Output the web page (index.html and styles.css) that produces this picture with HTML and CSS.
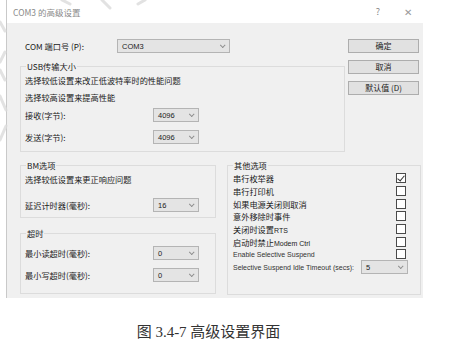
FILE: index.html
```html
<!DOCTYPE html>
<html lang="zh-CN">
<head>
    <meta charset="UTF-8">
    <meta name="viewport" content="width=device-width, initial-scale=1.0">
    <title>COM3 的高级设置</title>
    <link rel="stylesheet" href="styles.css">
</head>
<body>
    <div class="page">
        <!-- faint watermark strokes behind the dialog -->
        <svg class="watermark" width="473" height="160" viewBox="0 0 473 160">
            <g stroke="#dcdcdc" stroke-width="3" stroke-linecap="round" fill="none">
                <line x1="0" y1="22" x2="5" y2="31"/>
                <line x1="0" y1="62" x2="5" y2="52"/>
                <line x1="0" y1="70" x2="5" y2="80"/>
                <line x1="0" y1="96" x2="6" y2="110"/>
                <line x1="0" y1="140" x2="6" y2="126"/>
                <line x1="62" y1="0" x2="70" y2="4"/>
                <line x1="102" y1="0" x2="110" y2="8"/>
                <line x1="138" y1="4" x2="145" y2="0"/>
            </g>
        </svg>

        <div class="dialog">
            <!-- Title bar -->
            <div class="titlebar">
                <span class="title">COM3 的高级设置</span>
                <span class="tb-btn">?</span>
                <span class="tb-btn close">✕</span>
            </div>

            <div class="client">
                <div class="top">
                    <div class="main">
                        <div class="com-row">
                            <label>COM 端口号 (P):</label>
                            <div class="combo com">COM3<span class="arrow"></span></div>
                        </div>

                        <fieldset class="usb">
                            <legend>USB传输大小</legend>
                            <p class="line first">选择较低设置来改正低波特率时的性能问题</p>
                            <p class="line second">选择较高设置来提高性能</p>
                            <div class="field recv">
                                <label>接收(字节):</label>
                                <div class="combo">4096<span class="arrow"></span></div>
                            </div>
                            <div class="field send">
                                <label>发送(字节):</label>
                                <div class="combo">4096<span class="arrow"></span></div>
                            </div>
                        </fieldset>
                    </div>

                    <div class="buttons">
                        <button>确定</button>
                        <button>取消</button>
                        <button>默认值 (D)</button>
                    </div>
                </div>

                <div class="bottom">
                    <div class="left-col">
                        <fieldset class="bm">
                            <legend>BM选项</legend>
                            <p class="line first">选择较低设置来更正响应问题</p>
                            <div class="field delay">
                                <label>延迟计时器(毫秒):</label>
                                <div class="combo">16<span class="arrow"></span></div>
                            </div>
                        </fieldset>

                        <fieldset class="timeout">
                            <legend>超时</legend>
                            <div class="field read">
                                <label>最小读超时(毫秒):</label>
                                <div class="combo">0<span class="arrow"></span></div>
                            </div>
                            <div class="field write">
                                <label>最小写超时(毫秒):</label>
                                <div class="combo">0<span class="arrow"></span></div>
                            </div>
                        </fieldset>
                    </div>

                    <fieldset class="other">
                        <legend>其他选项</legend>
                        <div class="opt"><span>串行枚举器</span><span class="check checked"></span></div>
                        <div class="opt"><span>串行打印机</span><span class="check"></span></div>
                        <div class="opt"><span>如果电源关闭则取消</span><span class="check"></span></div>
                        <div class="opt"><span>意外移除时事件</span><span class="check"></span></div>
                        <div class="opt"><span>关闭时设置<small>RTS</small></span><span class="check"></span></div>
                        <div class="opt"><span>启动时禁止<small>Modem Ctrl</small></span><span class="check"></span></div>
                        <div class="opt en"><span>Enable Selective Suspend</span><span class="check"></span></div>
                        <div class="opt en">
                            <span>Selective Suspend Idle Timeout (secs):</span>
                            <div class="combo idle">5<span class="arrow"></span></div>
                        </div>
                    </fieldset>
                </div>
            </div>
        </div>

        <p class="caption">图 3.4-7 高级设置界面</p>
    </div>
</body>
</html>
```

FILE: styles.css
```css
* {
    box-sizing: border-box;
}
body {
    margin: 0;
    background-color: #fff;
    font-family: "Liberation Sans", "Noto Sans CJK SC", sans-serif;
    color: #1a1a1a;
}
.page {
    width: 473px;
    height: 343px;
    overflow: hidden;
    position: relative;
}
.watermark {
    position: absolute;
    left: 0;
    top: 0;
    z-index: 2;
    opacity: 0.8;
    pointer-events: none;
}
.dialog {
    width: 417px;
    height: 298px;
    margin-left: 6px;
    border-left: 1px solid #c9c9c9;
    display: flex;
    flex-direction: column;
}
.titlebar {
    height: 23px;
    display: flex;
    align-items: center;
    background-color: #fff;
    padding-left: 6px;
    font-family: "Noto Sans CJK SC", sans-serif;
    font-size: 8.5px;
    color: #8a8a8a;
}
.title {
    flex: 1;
}
.tb-btn {
    width: 30px;
    text-align: center;
    font-size: 9px;
    color: #888;
}
.tb-btn.close {
    font-size: 10px;
    color: #999;
}
.client {
    flex: 1;
    background-color: #f0f0f0;
    padding: 16px 0 0 13px;
    font-family: "Noto Sans CJK SC", sans-serif;
    font-size: 8.2px;
}
.top {
    display: flex;
}
.main {
    width: 325px;
}
.com-row {
    display: flex;
    align-items: center;
    height: 14px;
    padding-left: 5px;
}
.com-row label {
    width: 92px;
}
.combo {
    width: 46px;
    height: 14px;
    border: 1px solid #b4b4b4;
    background-color: #e4e4e4;
    display: flex;
    align-items: center;
    justify-content: space-between;
    padding: 0 5px 0 4px;
    font-family: "Liberation Sans", sans-serif;
    font-size: 7.5px;
    color: #222;
}
.combo.com {
    width: 113px;
}
.combo.idle {
    width: 47px;
}
.arrow {
    width: 4px;
    height: 4px;
    border-right: 1px solid #8c8c8c;
    border-bottom: 1px solid #8c8c8c;
    transform: rotate(45deg) translateY(-1px);
}
.buttons {
    width: 71px;
    margin-left: 3px;
    display: flex;
    flex-direction: column;
    gap: 7px;
}
.buttons button {
    height: 14px;
    padding: 0;
    border: 1px solid #adadad;
    background-color: #e1e1e1;
    font-family: "Noto Sans CJK SC", sans-serif;
    font-size: 8px;
    color: #1a1a1a;
    line-height: 12px;
}
fieldset {
    margin: 0;
    padding: 0 4px;
    border: 1px solid #dcdcdc;
    min-width: 0;
}
legend {
    margin-left: 1px;
    padding: 0 1px;
    height: 12px;
    line-height: 12px;
}
.line {
    margin: 0;
    line-height: 12px;
}
.field {
    display: flex;
    align-items: center;
    height: 14px;
}
.field label {
    width: 128px;
}
.usb {
    height: 92px;
    margin-top: 7px;
}
.usb .first {
    margin-top: 2px;
}
.usb .second {
    margin-top: 5px;
}
.usb .recv {
    margin-top: 5px;
}
.usb .send {
    margin-top: 8px;
}
.bottom {
    display: flex;
    margin-top: 7px;
}
.left-col {
    width: 196px;
    display: flex;
    flex-direction: column;
    gap: 9px;
}
.bm {
    height: 59px;
}
.bm .first {
    margin-top: 2px;
}
.bm .delay {
    margin-top: 13px;
}
.timeout {
    height: 67px;
}
.timeout .read {
    margin-top: 7px;
}
.timeout .write {
    margin-top: 8px;
}
.other {
    width: 194px;
    height: 136px;
    margin-left: 11px;
    padding: 0 14px 0 5px;
}
.other legend {
    margin-left: 0;
}
.opt {
    display: flex;
    align-items: center;
    justify-content: space-between;
    height: 12.7px;
}
.other legend + .opt {
    margin-top: 1px;
}
.opt small {
    font-family: "Liberation Sans", sans-serif;
    font-size: 7px;
}
.opt.en {
    font-family: "Liberation Sans", sans-serif;
    font-size: 7px;
    color: #333;
}
.opt.en .combo {
    margin-right: -2px;
}
.check {
    width: 10px;
    height: 10px;
    border: 1px solid #4a4a4a;
    background-color: #fff;
    position: relative;
}
.check.checked::after {
    content: "";
    position: absolute;
    left: 2px;
    top: 0;
    width: 3px;
    height: 6px;
    border-right: 1px solid #333;
    border-bottom: 1px solid #333;
    transform: rotate(40deg);
}
.caption {
    width: 417px;
    margin: 24px 0 0 0;
    text-align: center;
    line-height: 20px;
    font-family: "Liberation Serif", "Noto Sans CJK SC", serif;
    font-size: 15px;
    color: #333;
}
```
